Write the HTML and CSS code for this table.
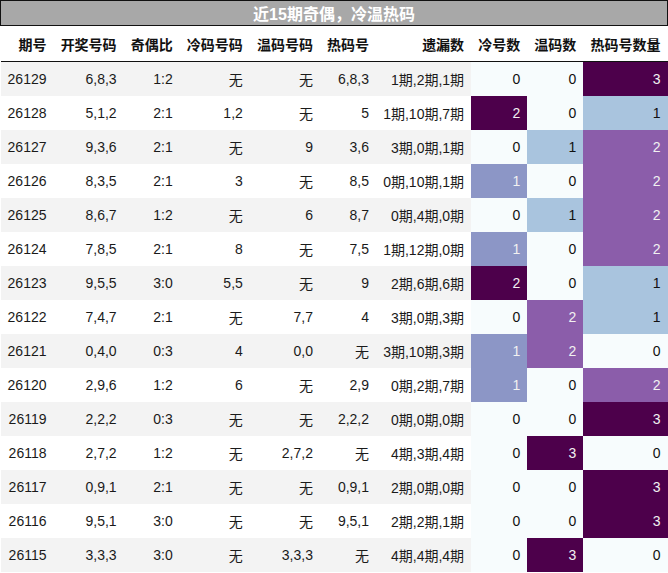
FILE: index.html
```html
<!DOCTYPE html>
<html lang="zh">
<head>
<meta charset="utf-8">
<title>近15期奇偶，冷温热码</title>
<link rel="stylesheet" href="styles.css">
</head>
<body>
<table class="grid">
<thead>
<tr><th class="title" colspan="10">近15期奇偶，冷温热码</th></tr>
<tr class="head">
<th>期号</th><th>开奖号码</th><th>奇偶比</th><th>冷码号码</th><th>温码号码</th><th>热码号</th><th>遗漏数</th><th>冷号数</th><th>温码数</th><th>热码号数量</th>
</tr>
</thead>
<tbody>
<tr><td>26129</td><td>6,8,3</td><td>1:2</td><td>无</td><td>无</td><td>6,8,3</td><td>1期,2期,1期</td><td class="v0">0</td><td class="v0">0</td><td class="v3">3</td></tr>
<tr><td>26128</td><td>5,1,2</td><td>2:1</td><td>1,2</td><td>无</td><td>5</td><td>1期,10期,7期</td><td class="v3">2</td><td class="v0">0</td><td class="v1">1</td></tr>
<tr><td>26127</td><td>9,3,6</td><td>2:1</td><td>无</td><td>9</td><td>3,6</td><td>3期,0期,1期</td><td class="v0">0</td><td class="v1">1</td><td class="v2">2</td></tr>
<tr><td>26126</td><td>8,3,5</td><td>2:1</td><td>3</td><td>无</td><td>8,5</td><td>0期,10期,1期</td><td class="vh">1</td><td class="v0">0</td><td class="v2">2</td></tr>
<tr><td>26125</td><td>8,6,7</td><td>1:2</td><td>无</td><td>6</td><td>8,7</td><td>0期,4期,0期</td><td class="v0">0</td><td class="v1">1</td><td class="v2">2</td></tr>
<tr><td>26124</td><td>7,8,5</td><td>2:1</td><td>8</td><td>无</td><td>7,5</td><td>1期,12期,0期</td><td class="vh">1</td><td class="v0">0</td><td class="v2">2</td></tr>
<tr><td>26123</td><td>9,5,5</td><td>3:0</td><td>5,5</td><td>无</td><td>9</td><td>2期,6期,6期</td><td class="v3">2</td><td class="v0">0</td><td class="v1">1</td></tr>
<tr><td>26122</td><td>7,4,7</td><td>2:1</td><td>无</td><td>7,7</td><td>4</td><td>3期,0期,3期</td><td class="v0">0</td><td class="v2">2</td><td class="v1">1</td></tr>
<tr><td>26121</td><td>0,4,0</td><td>0:3</td><td>4</td><td>0,0</td><td>无</td><td>3期,10期,3期</td><td class="vh">1</td><td class="v2">2</td><td class="v0">0</td></tr>
<tr><td>26120</td><td>2,9,6</td><td>1:2</td><td>6</td><td>无</td><td>2,9</td><td>0期,2期,7期</td><td class="vh">1</td><td class="v0">0</td><td class="v2">2</td></tr>
<tr><td>26119</td><td>2,2,2</td><td>0:3</td><td>无</td><td>无</td><td>2,2,2</td><td>0期,0期,0期</td><td class="v0">0</td><td class="v0">0</td><td class="v3">3</td></tr>
<tr><td>26118</td><td>2,7,2</td><td>1:2</td><td>无</td><td>2,7,2</td><td>无</td><td>4期,3期,4期</td><td class="v0">0</td><td class="v3">3</td><td class="v0">0</td></tr>
<tr><td>26117</td><td>0,9,1</td><td>2:1</td><td>无</td><td>无</td><td>0,9,1</td><td>2期,0期,0期</td><td class="v0">0</td><td class="v0">0</td><td class="v3">3</td></tr>
<tr><td>26116</td><td>9,5,1</td><td>3:0</td><td>无</td><td>无</td><td>9,5,1</td><td>2期,2期,1期</td><td class="v0">0</td><td class="v0">0</td><td class="v3">3</td></tr>
<tr><td>26115</td><td>3,3,3</td><td>3:0</td><td>无</td><td>3,3,3</td><td>无</td><td>4期,4期,4期</td><td class="v0">0</td><td class="v3">3</td><td class="v0">0</td></tr>
</tbody>
</table>
</body>
</html>
```
FILE: styles.css
```css
html, body {
  margin: 0;
  padding: 0;
  background: #ffffff;
}

.grid {
  border-collapse: collapse;
  border-spacing: 0;
  width: 668px;
  font-family: "Liberation Sans", Arial, "Noto Sans CJK SC", sans-serif;
  font-size: 14px;
  color: #1a1a1a;
}

.grid th,
.grid td {
  padding: 0 7px;
  text-align: right;
  vertical-align: middle;
  white-space: nowrap;
}

.grid .title {
  height: 24px;
  padding: 0;
  text-align: center;
  font-size: 16px;
  font-weight: bold;
  color: #ffffff;
  background: #a8a8a8;
  border: 1px solid #111111;
}

.head th {
  height: 35px;
  font-weight: bold;
  color: #111111;
  border-bottom: 1px solid #111111;
}

.grid td {
  height: 34px;
}

.grid tbody tr:nth-child(odd) {
  background: #f3f3f3;
}

.grid tbody tr:nth-child(even) {
  background: #ffffff;
}

.grid td.v0 {
  background: #f7fcfd;
  color: #111111;
}

.grid td.v1 {
  background: #a9c4de;
  color: #111111;
}

.grid td.vh {
  background: #8c96c6;
  color: #f1f1f1;
}

.grid td.v2 {
  background: #8b5daa;
  color: #f1f1f1;
}

.grid td.v3 {
  background: #4d004b;
  color: #f1f1f1;
}
```
